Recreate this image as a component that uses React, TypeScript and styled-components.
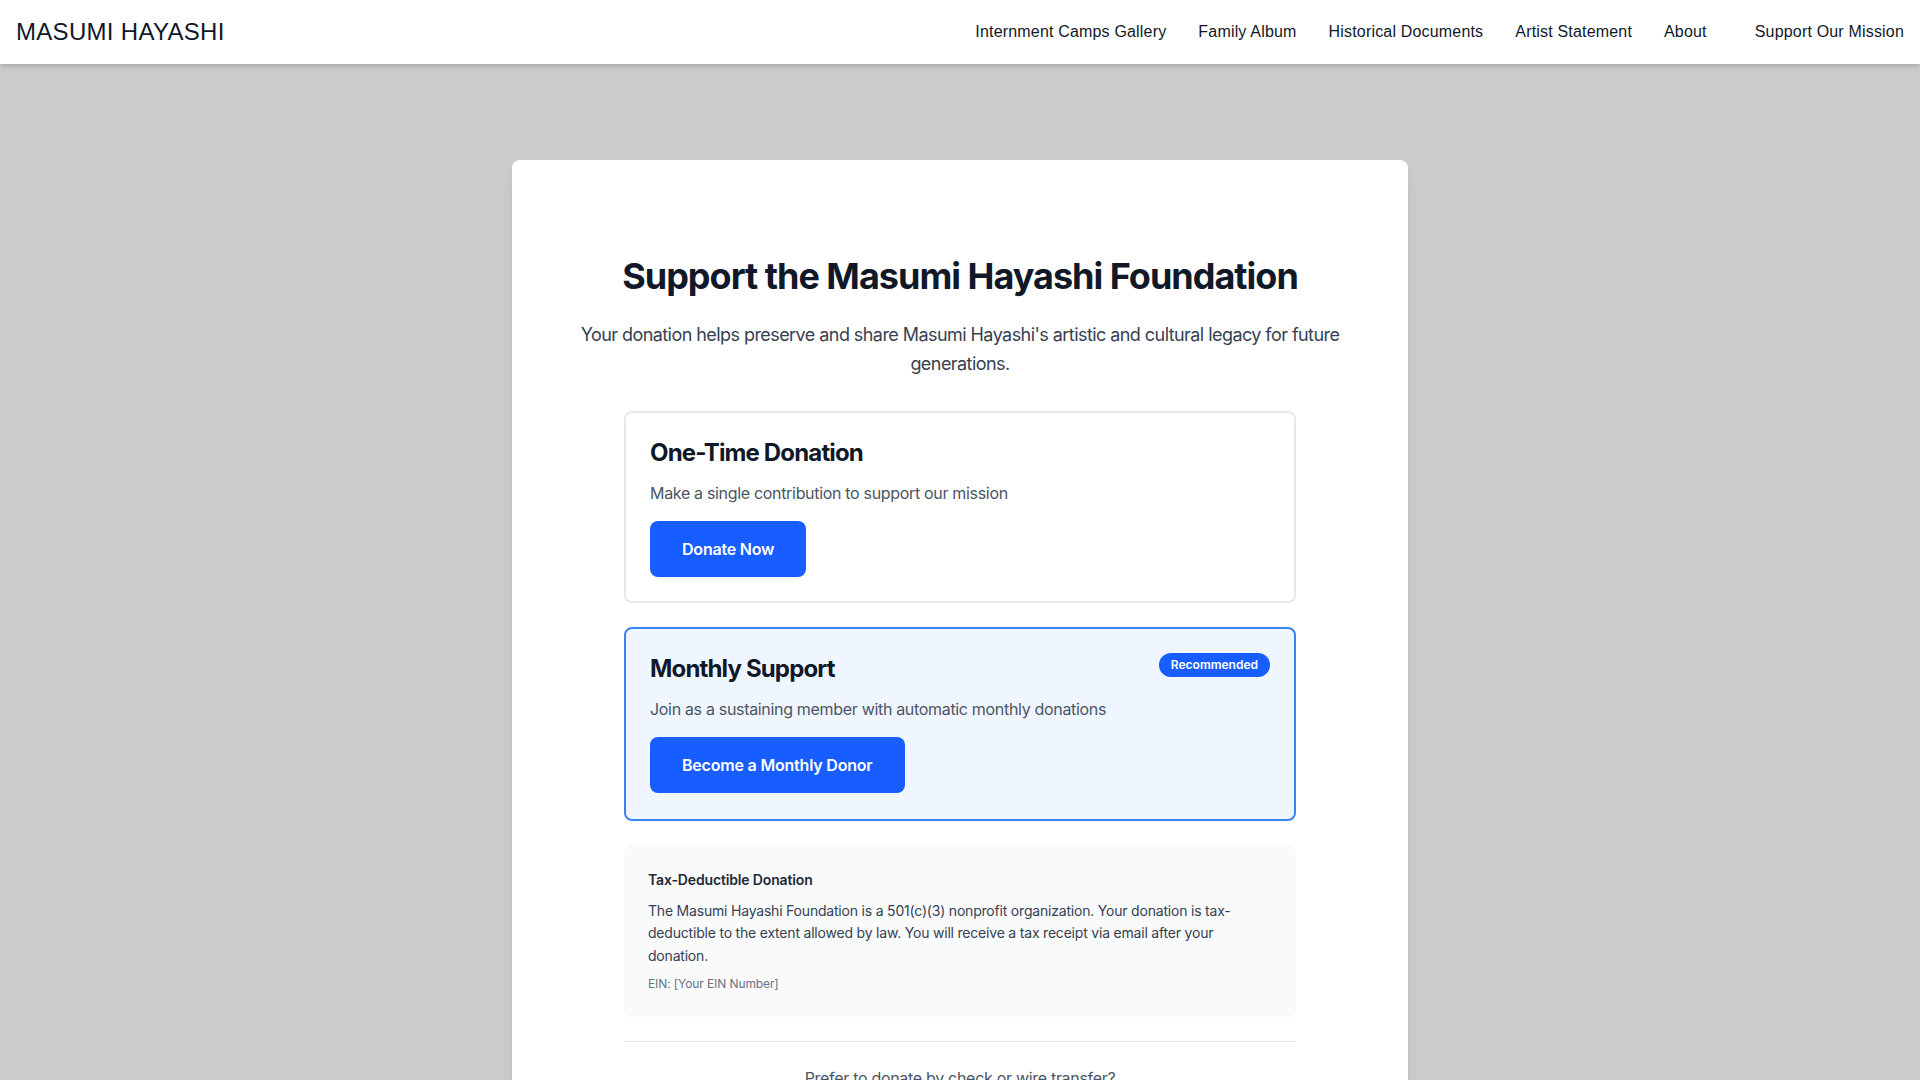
import React from "react";
import styled, { createGlobalStyle } from "styled-components";

const GlobalStyle = createGlobalStyle`
  * { box-sizing: border-box; }
  html, body { margin: 0; padding: 0; }
  body {
    background: #cccccc;
    font-family: Inter, "Noto Sans", sans-serif;
    color: #111827;
    -webkit-font-smoothing: antialiased;
  }
`;

const Page = styled.div`
  min-height: 100vh;
  display: flex;
  flex-direction: column;
`;

const Header = styled.header`
  height: 64px;
  background: #ffffff;
  box-shadow: 0 2px 6px rgba(0, 0, 0, 0.18);
  display: flex;
  align-items: center;
  justify-content: space-between;
  padding: 0 16px;
  position: relative;
  z-index: 2;
`;

const Logo = styled.a`
  font-family: "Liberation Sans", Arial, sans-serif;
  font-size: 24px;
  color: #111827;
  text-decoration: none;
  letter-spacing: 0.3px;
`;

const Nav = styled.nav`
  display: flex;
  align-items: center;
  gap: 32px;
`;

const NavLink = styled.a<{ $cta?: boolean }>`
  font-family: "Liberation Sans", Arial, sans-serif;
  font-size: 16px;
  color: #111827;
  text-decoration: none;
  letter-spacing: 0.18px;
  margin-left: ${(p) => (p.$cta ? "16px" : "0")};
`;

const Main = styled.main`
  padding: 96px 16px 64px;
`;

const Panel = styled.section`
  max-width: 896px;
  margin: 0 auto;
  background: #ffffff;
  border-radius: 8px;
  box-shadow: 0 10px 15px -3px rgba(0, 0, 0, 0.1), 0 4px 6px -4px rgba(0, 0, 0, 0.1);
  padding: 48px;
`;

const Inner = styled.div`
  padding: 48px 0;
  display: flex;
  flex-direction: column;
  align-items: center;
`;

const Title = styled.h1`
  margin: 0 0 24px;
  font-size: 36px;
  line-height: 40px;
  font-weight: 700;
  color: #111827;
  text-align: center;
  letter-spacing: -1px;
`;

const Lead = styled.p`
  margin: 0 0 32px;
  max-width: 768px;
  font-size: 18px;
  line-height: 1.625;
  color: #374151;
  text-align: center;
  letter-spacing: -0.56px;
`;

const Options = styled.div`
  width: 100%;
  max-width: 672px;
  display: flex;
  flex-direction: column;
  gap: 24px;
`;

const OptionCard = styled.div<{ $featured?: boolean }>`
  border: 2px solid ${(p) => (p.$featured ? "#3b82f6" : "#e5e7eb")};
  background: ${(p) => (p.$featured ? "#eff6ff" : "#ffffff")};
  border-radius: 8px;
  padding: 24px 24px ${(p) => (p.$featured ? "26px" : "24px")};
`;

const CardHead = styled.div`
  display: flex;
  justify-content: space-between;
  align-items: flex-start;
  margin-bottom: 12px;
`;

const CardTitle = styled.h2`
  margin: 0;
  font-size: 24px;
  line-height: 32px;
  font-weight: 700;
  color: #111827;
  letter-spacing: -0.85px;
`;

const Badge = styled.span`
  background: #175dff;
  color: #ffffff;
  font-size: 12px;
  line-height: 16px;
  font-weight: 600;
  padding: 4px 12px;
  border-radius: 9999px;
`;

const CardText = styled.p`
  margin: 0 0 16px;
  font-size: 16px;
  line-height: 24px;
  color: #4b5563;
  letter-spacing: -0.32px;
`;

const PrimaryButton = styled.button`
  font-family: Inter, "Noto Sans", sans-serif;
  background: #175dff;
  color: #ffffff;
  border: none;
  border-radius: 8px;
  padding: 16px 32px;
  font-size: 16px;
  line-height: 24px;
  font-weight: 600;
  letter-spacing: -0.2px;
  cursor: pointer;
`;

const TaxBox = styled.div`
  background: #f9fafb;
  border-radius: 8px;
  padding: 24px 24px 25px;
`;

const TaxTitle = styled.h3`
  margin: 0 0 9px;
  font-size: 14px;
  line-height: 22px;
  font-weight: 600;
  color: #1f2937;
  letter-spacing: -0.15px;
`;

const TaxText = styled.p`
  margin: 0 0 8px;
  font-size: 14px;
  line-height: 1.625;
  color: #374151;
  letter-spacing: -0.2px;
`;

const Ein = styled.p`
  margin: 0;
  font-size: 12px;
  line-height: 16px;
  color: #6b7280;
  letter-spacing: -0.1px;
`;

const Alt = styled.div`
  border-top: 1px solid #e5e7eb;
  padding-top: 24px;
  text-align: center;
`;

const AltText = styled.p`
  margin: 0 0 8px;
  font-size: 16px;
  line-height: 24px;
  color: #4b5563;
  letter-spacing: -0.3px;
`;

const AltLink = styled.a`
  font-size: 16px;
  line-height: 24px;
  color: #175dff;
  font-weight: 500;
  text-decoration: none;
`;

export default function App() {
  return (
    <>
      <GlobalStyle />
      <Page>
        <Header>
          <Logo href="#">MASUMI HAYASHI</Logo>
          <Nav>
            <NavLink href="#">Internment Camps Gallery</NavLink>
            <NavLink href="#">Family Album</NavLink>
            <NavLink href="#">Historical Documents</NavLink>
            <NavLink href="#">Artist Statement</NavLink>
            <NavLink href="#">About</NavLink>
            <NavLink href="#" $cta>
              Support Our Mission
            </NavLink>
          </Nav>
        </Header>
        <Main>
          <Panel>
            <Inner>
              <Title>Support the Masumi Hayashi Foundation</Title>
              <Lead>
                Your donation helps preserve and share Masumi Hayashi's artistic and cultural
                legacy for future generations.
              </Lead>
              <Options>
                <OptionCard>
                  <CardHead>
                    <CardTitle>One-Time Donation</CardTitle>
                  </CardHead>
                  <CardText>Make a single contribution to support our mission</CardText>
                  <PrimaryButton>Donate Now</PrimaryButton>
                </OptionCard>
                <OptionCard $featured>
                  <CardHead>
                    <CardTitle>Monthly Support</CardTitle>
                    <Badge>Recommended</Badge>
                  </CardHead>
                  <CardText>Join as a sustaining member with automatic monthly donations</CardText>
                  <PrimaryButton>Become a Monthly Donor</PrimaryButton>
                </OptionCard>
                <TaxBox>
                  <TaxTitle>Tax-Deductible Donation</TaxTitle>
                  <TaxText>
                    The Masumi Hayashi Foundation is a 501(c)(3) nonprofit organization. Your
                    donation is tax-deductible to the extent allowed by law. You will receive a tax
                    receipt via email after your donation.
                  </TaxText>
                  <Ein>EIN: [Your EIN Number]</Ein>
                </TaxBox>
                <Alt>
                  <AltText>Prefer to donate by check or wire transfer?</AltText>
                  <AltLink href="#">Contact us for details</AltLink>
                </Alt>
              </Options>
            </Inner>
          </Panel>
        </Main>
      </Page>
    </>
  );
}
